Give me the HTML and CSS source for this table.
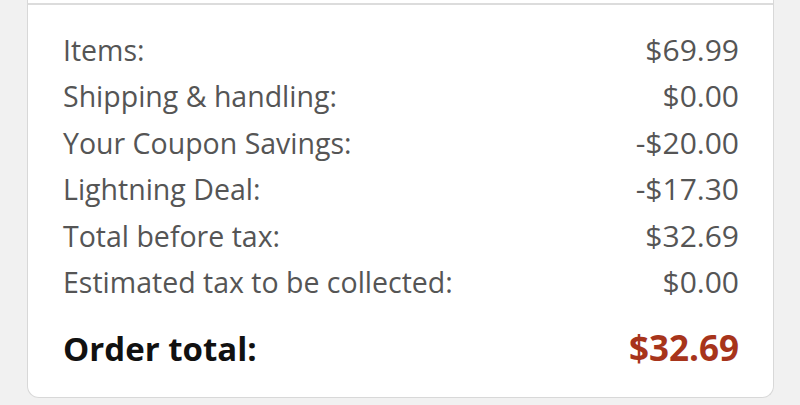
FILE: index.html
```html
<!DOCTYPE html>
<html>
<head>
<meta charset="utf-8">
<link rel="stylesheet" href="styles.css">
</head>
<body>
<div class="card">
  <div class="summary">
    <div class="row"><span>Items:</span><span class="amt">$69.99</span></div>
    <div class="row"><span>Shipping &amp; handling:</span><span class="amt">$0.00</span></div>
    <div class="row"><span>Your Coupon Savings:</span><span class="amt">-$20.00</span></div>
    <div class="row"><span>Lightning Deal:</span><span class="amt">-$17.30</span></div>
    <div class="row"><span>Total before tax:</span><span class="amt">$32.69</span></div>
    <div class="row"><span>Estimated tax to be collected:</span><span class="amt">$0.00</span></div>
    <div class="row total"><span>Order total:</span><span class="amt price">$32.69</span></div>
  </div>
</div>
</body>
</html>
```
FILE: styles.css
```css
html, body {
  margin: 0;
  padding: 0;
  background: #f1f1f1;
  font-family: "Open Sans", "Noto Sans", sans-serif;
}
.card {
  margin: 0 26px 0 27px;
  background: #fff;
  border: 1px solid #d8d8d8;
  border-top: none;
  border-radius: 0 0 12px 12px;
  padding-top: 3px;
}
.summary {
  border-top: 2px solid #dcdcdc;
  padding: 22px 34px 26px 35px;
}
.row {
  display: flex;
  justify-content: space-between;
  align-items: baseline;
  font-size: 28.5px;
  line-height: 46.4px;
  color: #555;
}
.amt {
  font-size: 30px;
}
.total {
  margin-top: 21px;
  font-weight: 700;
  font-size: 33px;
  line-height: 44px;
  color: #111;
}
.total .amt {
  font-size: 35px;
}
.price {
  color: #a7341b;
}
```
